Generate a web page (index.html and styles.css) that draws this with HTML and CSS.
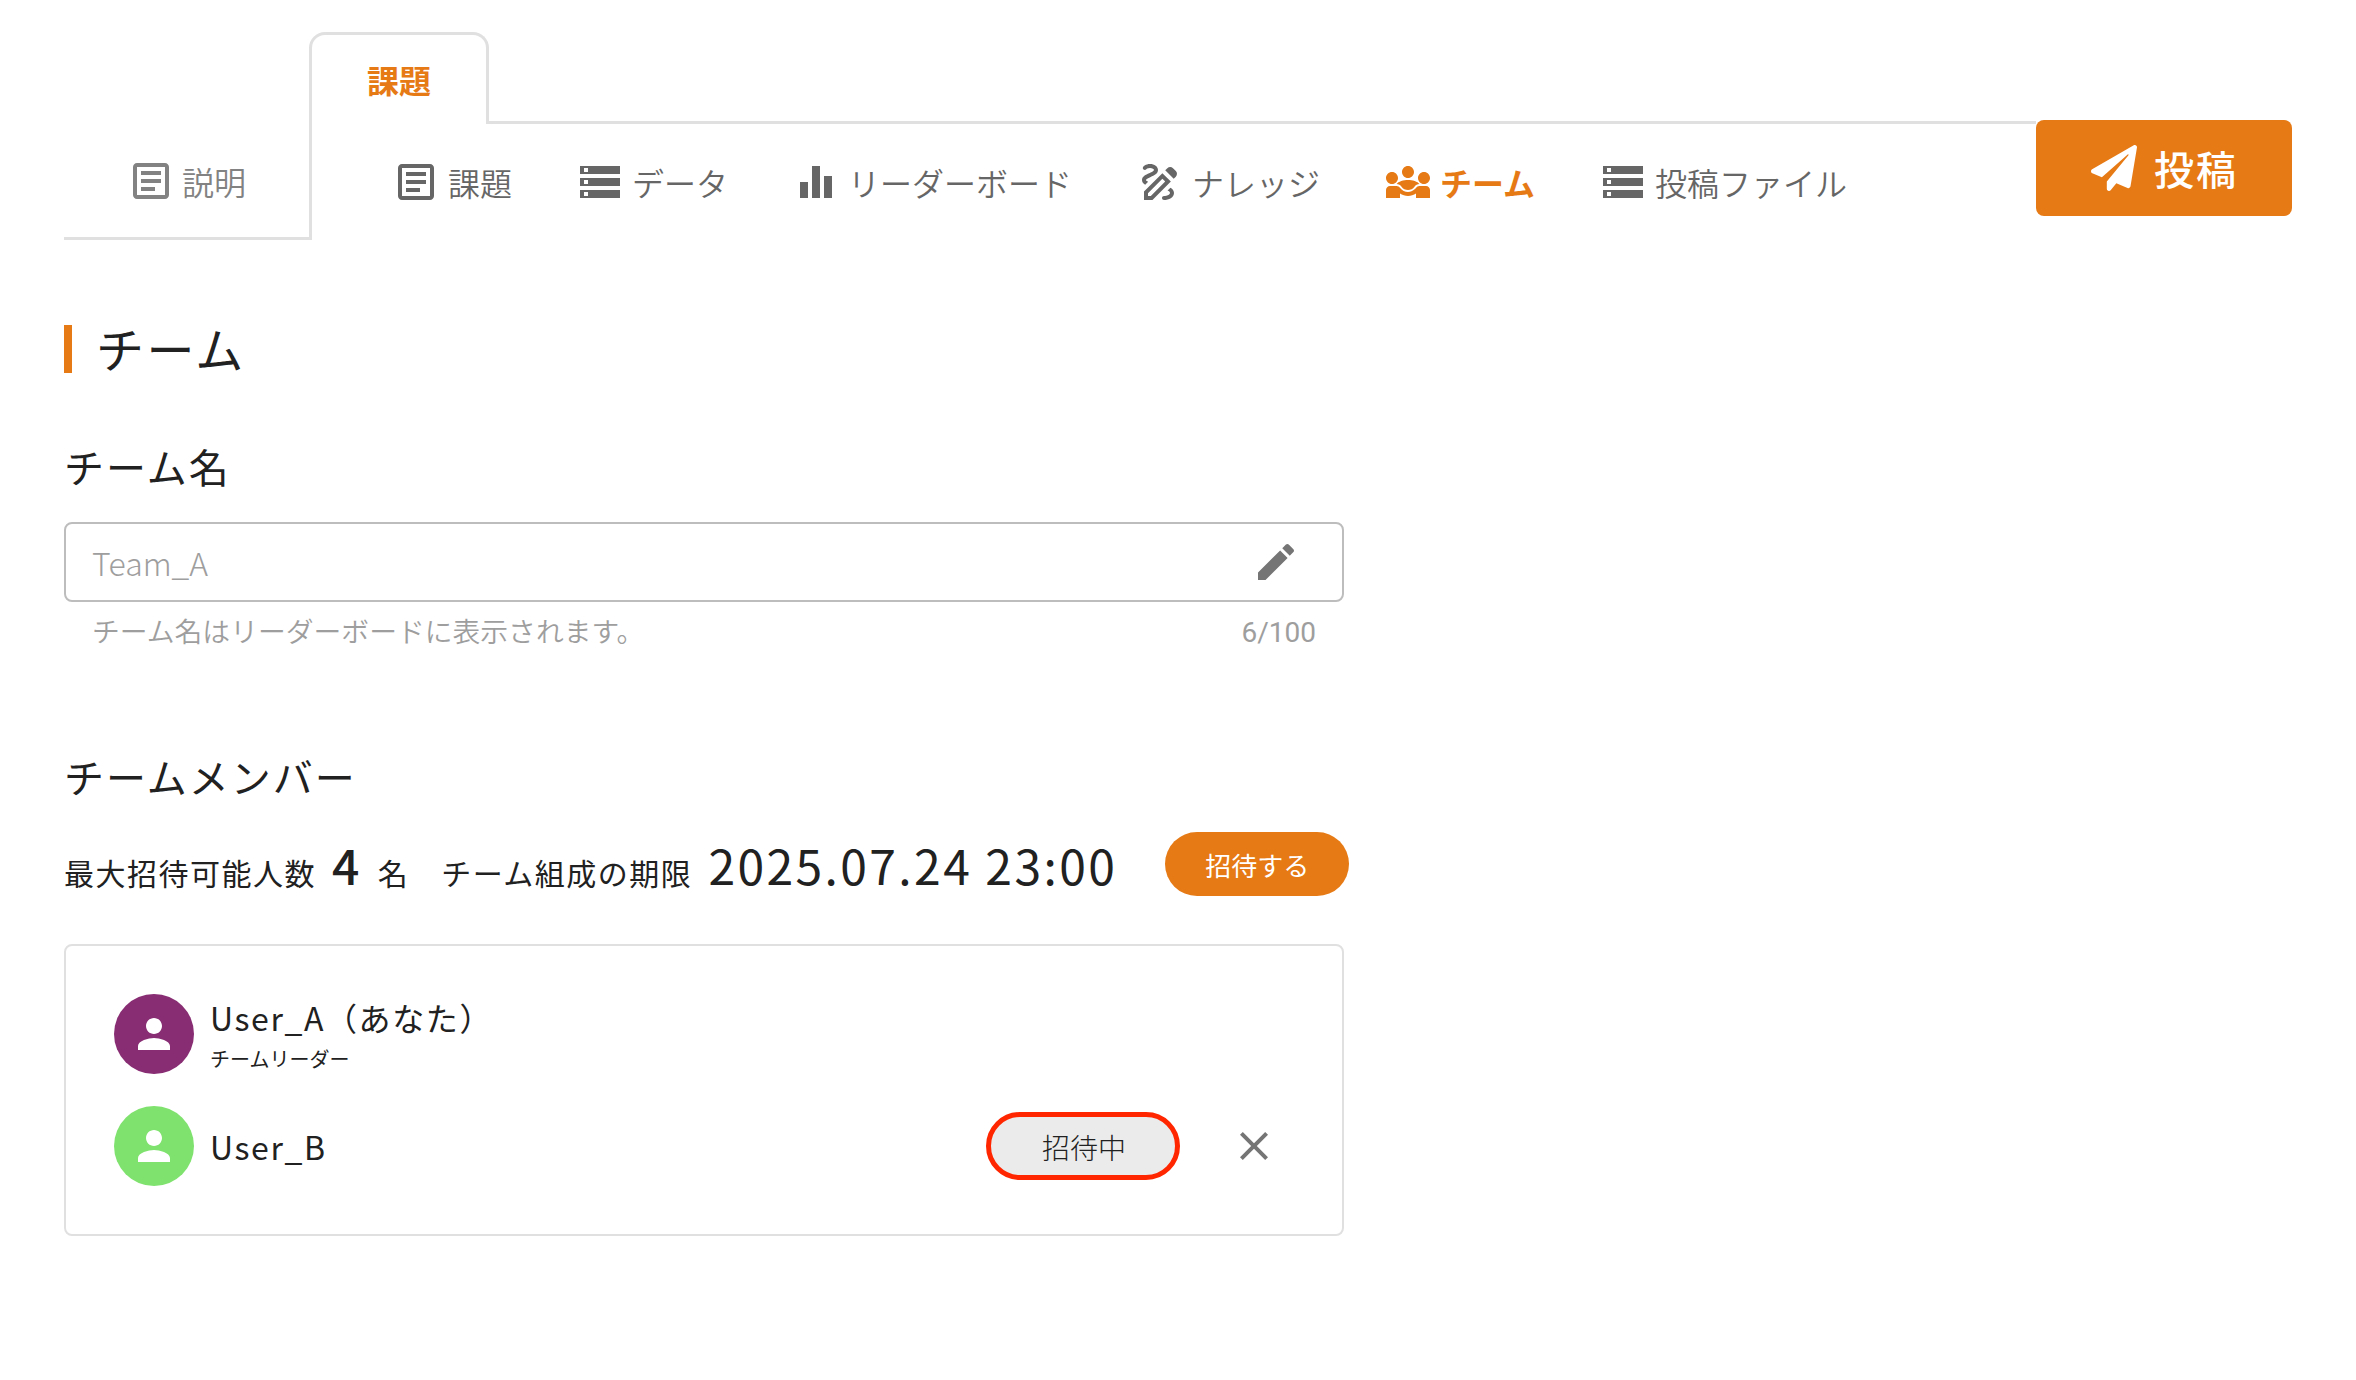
FILE: index.html
```html
<!DOCTYPE html>
<html lang="ja">
<head>
    <meta charset="UTF-8">
    <meta name="viewport" content="width=device-width, initial-scale=1.0">
    <title>チーム</title>
    <link rel="stylesheet" href="styles.css">
</head>
<body>
    <header class="tabs">
        <a class="tab-side">
            <svg class="icon" viewBox="0 0 24 24"><path d="M19 5v14H5V5h14m0-2H5c-1.1 0-2 .9-2 2v14c0 1.1.9 2 2 2h14c1.1 0 2-.9 2-2V5c0-1.1-.9-2-2-2zM14 17H7v-2h7v2zm3-4H7v-2h10v2zm0-4H7V7h10v2z"/></svg>
            <span>説明</span>
        </a>
        <div class="tab-main">
            <div class="tab-row">
                <div class="tab-active">課題</div>
                <div class="tab-line"></div>
            </div>
            <nav class="nav">
                <a class="nav-item">
                    <svg class="icon" viewBox="0 0 24 24"><path d="M19 5v14H5V5h14m0-2H5c-1.1 0-2 .9-2 2v14c0 1.1.9 2 2 2h14c1.1 0 2-.9 2-2V5c0-1.1-.9-2-2-2zM14 17H7v-2h7v2zm3-4H7v-2h10v2zm0-4H7V7h10v2z"/></svg>
                    <span>課題</span>
                </a>
                <a class="nav-item">
                    <svg class="icon" viewBox="0 0 24 24"><path d="M2 20h20v-4H2v4zm2-3h2v2H4v-2zM2 4v4h20V4H2zm4 3H4V5h2v2zm-4 7h20v-4H2v4zm2-3h2v2H4v-2z"/></svg>
                    <span>データ</span>
                </a>
                <a class="nav-item">
                    <svg class="icon" viewBox="0 0 24 24"><path d="M10 20h4V4h-4v16zm-6 0h4v-8H4v8zM16 9v11h4V9h-4z"/></svg>
                    <span>リーダーボード</span>
                </a>
                <a class="nav-item">
                    <svg class="icon" viewBox="0 0 24 24"><path d="M18.85 10.39l1.06-1.06c.78-.78.78-2.05 0-2.83L18.5 5.09c-.78-.78-2.05-.78-2.83 0l-1.06 1.06 4.24 4.24zM13.19 7.57L4 16.76V21h4.24l9.19-9.19-4.24-4.24zM7.41 19H6v-1.41l7.19-7.19 1.41 1.41L7.41 19zM19 17.5c0 2.19-2.54 3.5-5 3.5-.55 0-1-.45-1-1s.45-1 1-1c1.54 0 3-.73 3-1.5 0-.47-.48-.87-1.23-1.2l1.48-1.48c1.07.63 1.75 1.47 1.75 2.68zM4.58 13.35C3.61 12.79 3 12.06 3 11c0-1.8 1.89-2.63 3.56-3.36C7.59 7.18 9 6.56 9 6c0-.41-.78-1-2-1-1.26 0-1.8.61-1.83.64-.35.41-.98.46-1.4.12-.41-.34-.49-.95-.15-1.38C3.73 4.24 4.76 3 7 3s4 1.32 4 3c0 1.87-1.93 2.72-3.64 3.47C6.42 9.88 5 10.5 5 11c0 .31.43.6 1.07.86l-1.49 1.49z"/></svg>
                    <span>ナレッジ</span>
                </a>
                <a class="nav-item active">
                    <svg class="icon" viewBox="0 0 24 24"><path d="M6.32 13.01c.96.02 1.85.5 2.45 1.34C9.5 15.38 10.71 16 12 16s2.5-.62 3.23-1.66c.6-.84 1.49-1.32 2.45-1.34C16.96 11.78 14.08 11 12 11s-4.96.78-5.68 2.01zM4 13c1.66 0 3-1.34 3-3s-1.34-3-3-3-3 1.34-3 3 1.34 3 3 3zM20 13c1.66 0 3-1.34 3-3s-1.34-3-3-3-3 1.34-3 3 1.34 3 3 3zM12 10c1.66 0 3-1.34 3-3s-1.34-3-3-3-3 1.34-3 3 1.34 3 3 3zM21 14h-3.27c-.77 0-1.35.45-1.68.92C16.01 14.98 14.69 17 12 17c-1.43 0-3.03-.64-4.05-2.08C7.56 14.37 6.95 14 6.27 14H3c-1.1 0-2 .9-2 2v4h7v-2.26c1.15.8 2.54 1.26 4 1.26s2.85-.46 4-1.26V20h7v-4c0-1.1-.9-2-2-2z"/></svg>
                    <span>チーム</span>
                </a>
                <a class="nav-item">
                    <svg class="icon" viewBox="0 0 24 24"><path d="M2 20h20v-4H2v4zm2-3h2v2H4v-2zM2 4v4h20V4H2zm4 3H4V5h2v2zm-4 7h20v-4H2v4zm2-3h2v2H4v-2z"/></svg>
                    <span>投稿ファイル</span>
                </a>
            </nav>
        </div>
        <button class="submit-btn">
            <svg class="plane" viewBox="0 0 512 512"><path d="M476 3.2L12.5 270.6c-18.1 10.4-15.8 35.6 2.2 43.2L121 358.4l287.3-253.2c5.5-4.9 13.3 2.6 8.6 8.3L176 407v80.5c0 23.6 28.5 32.9 42.5 15.8L282 426l124.6 52.2c14.2 6 30.4-2.9 33-18.2l72-432C515 7.8 493.3-6.8 476 3.2z"/></svg>
            <span>投稿</span>
        </button>
    </header>

    <main class="content">
        <h1>チーム</h1>

        <h2>チーム名</h2>
        <div class="name-field">
            <span>Team_A</span>
            <svg class="icon" viewBox="0 0 24 24"><path d="M3 17.25V21h3.75L17.81 9.94l-3.75-3.75L3 17.25zM20.71 7.04c.39-.39.39-1.02 0-1.41l-2.34-2.34c-.39-.39-1.02-.39-1.41 0l-1.83 1.83 3.75 3.75 1.83-1.83z"/></svg>
        </div>
        <div class="helper">
            <span>チーム名はリーダーボードに表示されます。</span>
            <span class="counter">6/100</span>
        </div>

        <h2 class="members-title">チームメンバー</h2>
        <div class="summary">
            <span>最大招待可能人数</span>
            <span class="limit">4</span>
            <span class="unit">名</span>
            <span class="deadline-label">チーム組成の期限</span>
            <span class="deadline">2025.07.24 23:00</span>
            <button class="invite-btn">招待する</button>
        </div>

        <div class="members">
            <div class="member">
                <div class="avatar purple">
                    <svg class="icon" viewBox="0 0 24 24"><path d="M12 12c2.21 0 4-1.79 4-4s-1.79-4-4-4-4 1.79-4 4 1.79 4 4 4zm0 2c-2.67 0-8 1.34-8 4v2h16v-2c0-2.66-5.33-4-8-4z"/></svg>
                </div>
                <div class="member-name">
                    <div class="name">User_A（あなた）</div>
                    <div class="role">チームリーダー</div>
                </div>
            </div>
            <div class="member">
                <div class="avatar green">
                    <svg class="icon" viewBox="0 0 24 24"><path d="M12 12c2.21 0 4-1.79 4-4s-1.79-4-4-4-4 1.79-4 4 1.79 4 4 4zm0 2c-2.67 0-8 1.34-8 4v2h16v-2c0-2.66-5.33-4-8-4z"/></svg>
                </div>
                <div class="member-name">
                    <div class="name">User_B</div>
                </div>
                <div class="badge">招待中</div>
                <svg class="icon close" viewBox="0 0 24 24"><path d="M19 6.41L17.59 5 12 10.59 6.41 5 5 6.41 10.59 12 5 17.59 6.41 19 12 13.41 17.59 19 19 17.59 13.41 12z"/></svg>
            </div>
        </div>
    </main>
</body>
</html>
```
FILE: styles.css
```css
* {
    box-sizing: border-box;
}
body {
    margin: 0;
    padding: 32px 64px 0;
    background-color: #fff;
    color: #212121;
    font-family: "Noto Sans CJK JP", sans-serif;
    font-size: 32px;
}
button {
    padding: 0;
    border: none;
    background-color: #e67a15;
    color: #fff;
    font-family: inherit;
}
.icon {
    width: 48px;
    height: 48px;
    flex-shrink: 0;
    fill: currentColor;
}

/* tabs */
.tabs {
    display: flex;
    height: 208px;
}
.tab-side {
    display: flex;
    gap: 7px;
    width: 245px;
    padding: 125px 0 0 63px;
    border-bottom: 3px solid #e0e0e0;
    color: #828282;
    font-weight: 350;
    line-height: 49px;
}
.tab-main {
    flex: 1;
}
.tab-row {
    display: flex;
    height: 92px;
}
.tab-active {
    width: 180px;
    padding-top: 21px;
    border: 3px solid #e0e0e0;
    border-bottom: none;
    border-radius: 16px 16px 0 0;
    color: #e67a15;
    font-weight: 700;
    line-height: 46px;
    text-align: center;
}
.tab-line {
    flex: 1;
    border-bottom: 3px solid #e0e0e0;
}
.nav {
    display: flex;
    gap: 64px;
    height: 116px;
    padding: 34px 0 0 80px;
    border-left: 3px solid #e0e0e0;
    color: #666;
    font-weight: 350;
    line-height: 49px;
}
.nav-item {
    display: flex;
    gap: 8px;
    white-space: nowrap;
}
.nav-item.active {
    color: #e67a15;
    font-weight: 700;
}
.submit-btn {
    display: flex;
    align-items: center;
    width: 256px;
    height: 96px;
    margin-top: 88px;
    padding-left: 55px;
    border-radius: 8px;
    font-size: 40px;
    font-weight: 500;
    letter-spacing: 0.05em;
}
.plane {
    width: 46px;
    height: 46px;
    margin-right: 17px;
    fill: #fff;
}

/* team */
.content {
    width: 1280px;
}
h1 {
    height: 48px;
    margin: 85px 0 0;
    padding-left: 24px;
    border-left: 8px solid #e67a15;
    font-size: 48px;
    font-weight: 400;
    line-height: 45px;
    letter-spacing: 0.05em;
}
h2 {
    margin: 63px 0 0;
    font-size: 40px;
    font-weight: 400;
    line-height: 60px;
    letter-spacing: 0.05em;
}
.name-field {
    display: flex;
    align-items: center;
    justify-content: space-between;
    height: 80px;
    margin-top: 26px;
    padding: 0 42px 0 26px;
    border: 2px solid #bdbdbd;
    border-radius: 8px;
    color: #9e9e9e;
    font-weight: 300;
}
.name-field .icon {
    color: #757575;
}
.helper {
    display: flex;
    justify-content: space-between;
    padding: 6px 28px 0;
    color: #9e9e9e;
    font-size: 27.8px;
    font-weight: 350;
    line-height: 44px;
}
.counter {
    padding-top: 3px;
    font-family: Roboto, sans-serif;
    font-size: 28px;
    font-weight: 400;
}
.members-title {
    margin-top: 91px;
}
.summary {
    display: flex;
    align-items: baseline;
    height: 64px;
    margin-top: 26px;
    font-size: 30px;
    line-height: 64px;
    letter-spacing: 0.05em;
    white-space: nowrap;
}
.limit {
    margin-left: 16px;
    font-size: 48px;
    font-weight: 500;
    letter-spacing: 0.05em;
}
.unit {
    margin-left: 16px;
}
.deadline-label {
    margin-left: 32px;
}
.deadline {
    margin-left: 16px;
    font-size: 48px;
    letter-spacing: 0.05em;
}
.invite-btn {
    width: 184px;
    height: 64px;
    flex-shrink: 0;
    align-self: flex-start;
    margin-left: 48px;
    border-radius: 32px;
    font-size: 26px;
}

/* members */
.members {
    height: 292px;
    margin-top: 48px;
    padding: 48px;
    border: 2px solid #e0e0e0;
    border-radius: 8px;
}
.member {
    display: flex;
    align-items: center;
    height: 80px;
    margin-bottom: 32px;
}
.avatar {
    display: flex;
    align-items: center;
    justify-content: center;
    width: 80px;
    height: 80px;
    margin-right: 16px;
    border-radius: 50%;
    color: #fff;
}
.avatar.purple {
    background-color: #882d73;
}
.avatar.green {
    background-color: #7fe26e;
}
.member-name {
    flex: 1;
}
.name {
    line-height: 48px;
    letter-spacing: 0.05em;
}
.role {
    font-size: 20px;
    line-height: 35px;
}
.badge {
    width: 194px;
    height: 68px;
    margin-right: 50px;
    padding-left: 2px;
    border: 5px solid #ff2600;
    border-radius: 34px;
    background-color: #ebebeb;
    font-size: 28px;
    font-weight: 300;
    line-height: 60px;
    text-align: center;
}
.close {
    margin-right: 16px;
    color: #757575;
}
```
